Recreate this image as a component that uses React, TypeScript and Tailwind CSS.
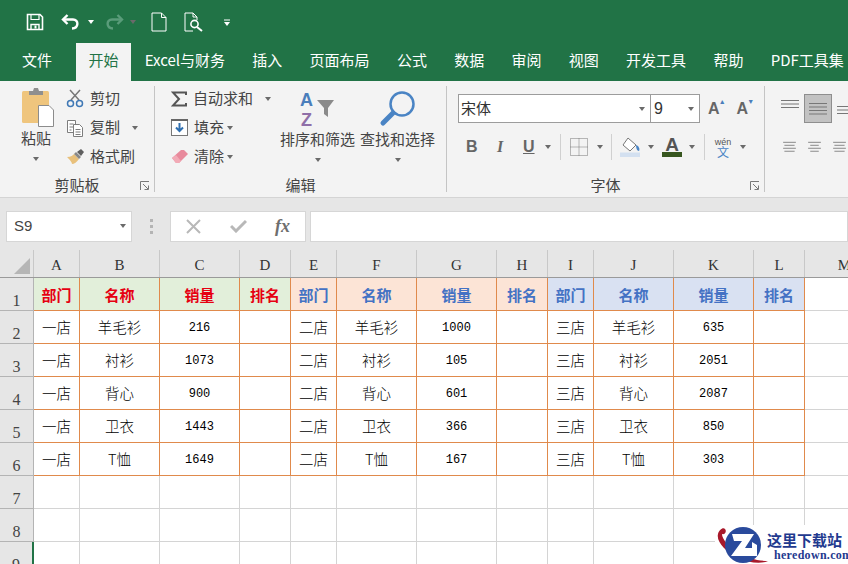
import type { ReactNode } from 'react';

const SANS = 'font-["Noto_Sans_CJK_SC","Noto_Sans",sans-serif]';

const tabs = ['Excel与财务', '插入', '页面布局', '公式', '数据', '审阅', '视图', '开发工具', '帮助', 'PDF工具集'];
const columns = ['A', 'B', 'C', 'D', 'E', 'F', 'G', 'H', 'I', 'J', 'K', 'L', 'M'];
const sales = [
  [['一店', '羊毛衫', '216'], ['二店', '羊毛衫', '1000'], ['三店', '羊毛衫', '635']],
  [['一店', '衬衫', '1073'], ['二店', '衬衫', '105'], ['三店', '衬衫', '2051']],
  [['一店', '背心', '900'], ['二店', '背心', '601'], ['三店', '背心', '2087']],
  [['一店', '卫衣', '1443'], ['二店', '卫衣', '366'], ['三店', '卫衣', '850']],
  [['一店', 'T恤', '1649'], ['二店', 'T恤', '167'], ['三店', 'T恤', '303']],
];
const headerFills = ['bg-[#e2efda] text-[#e60012]', 'bg-[#fce4d6] text-[#4472c4]', 'bg-[#d9e1f2] text-[#4472c4]'];
const headerLabels = ['部门', '名称', '销量', '排名'];
const gridCols = 'grid grid-cols-[34px_46px_80px_80px_51px_46px_80px_80px_51px_46px_80px_80px_51px_80px]';

function Caret({ className = '' }: { className?: string }) {
  return <span className={`inline-block w-0 h-0 border-x-[3.5px] border-x-transparent border-t-[4px] border-t-[#6a6a6a] ${className}`} />;
}

function SmallRow({ icon, label, caret, caretClass = 'ml-[3px]' }: { icon: ReactNode; label: string; caret?: boolean; caretClass?: string }) {
  return (
    <div className="flex items-center h-[29px] text-[15px] text-[#444]">
      {icon}
      <span>{label}</span>
      {caret && <Caret className={caretClass} />}
    </div>
  );
}

function DialogLauncher() {
  return (
    <svg width="10" height="10" viewBox="0 0 10 10" className="absolute right-[4px] bottom-[1px]" fill="none" stroke="#777">
      <path d="M0.5 9V0.5H9" />
      <path d="M3 3l5 5M8.5 4.5v4h-4" />
    </svg>
  );
}

function Group({ width, label, launcher, children }: { width: string; label: string; launcher?: boolean; children: ReactNode }) {
  return (
    <div className={`relative flex flex-col h-[106px] border-r border-[#c4c4c4] mt-[5px] ${width}`}>
      <div className="flex-1 mt-[-5px] min-h-0">{children}</div>
      <div className="h-[20px] mb-[-3px] text-center text-[15px] leading-[20px] text-[#444]">{label}</div>
      {launcher && <DialogLauncher />}
    </div>
  );
}

function AlignIcon({ widths }: { widths: number[] }) {
  return (
    <svg width="20" height="14" viewBox="0 0 20 14" stroke="#777" strokeWidth="1">
      {widths.map((w, i) => (
        <path key={i} d={`M${10 - w / 2} ${1.5 + i * 3.5}H${10 + w / 2}`} />
      ))}
    </svg>
  );
}

function QuickAccess() {
  return (
    <div className="flex items-center h-[43px] pl-[26px]">
      <svg width="18" height="18" viewBox="0 0 18 18" fill="none" stroke="#fff" strokeWidth="1.6">
        <path d="M1.5 1.5H14l2.5 2.5v12.5H1.5z" />
        <path d="M5 1.5v5h8v-5" strokeWidth="1.2" />
        <path d="M5 16.5v-5h8v5" strokeWidth="1.4" />
        <path d="M9.5 12.5v3" strokeWidth="2" />
      </svg>
      <svg width="20" height="18" viewBox="0 0 20 18" fill="none" stroke="#fff" strokeWidth="2.4" className="ml-[17px]">
        <path d="M6.5 2L2 6.5 6.5 11" />
        <path d="M2 6.5h10c6 0 6 8.5-1 9" />
      </svg>
      <Caret className="ml-[7px] border-t-white" />
      <svg width="20" height="18" viewBox="0 0 20 18" fill="none" stroke="#5a9c7a" strokeWidth="2.4" className="ml-[10px]">
        <path d="M13.5 2L18 6.5 13.5 11" />
        <path d="M18 6.5H8c-6 0-6 8.5 1 9" />
      </svg>
      <Caret className="ml-[6px] border-t-[#5a9c7a]" />
      <svg width="16" height="20" viewBox="0 0 16 20" fill="none" stroke="#fff" strokeWidth="1" className="ml-[15px]">
        <path d="M1 1h9.5L15 5.5V19H1z" />
        <path d="M10.5 1v4.5H15" />
      </svg>
      <svg width="20" height="20" viewBox="0 0 20 20" fill="none" stroke="#fff" className="ml-[17px]">
        <path d="M9 19H1V1h8l4 4v3M9 1v4h4" />
        <circle cx="10.5" cy="12" r="3.6" strokeWidth="1.6" />
        <path d="M13 15l5 4" strokeWidth="2" />
      </svg>
      <svg width="8" height="8" viewBox="0 0 8 8" className="ml-[19px] mt-[2px]" fill="#fff">
        <path d="M1 0.5h6v1H1zM1 3h6L4 7z" />
      </svg>
    </div>
  );
}

function TabBar() {
  return (
    <div className="flex h-[38px] pl-[8px] text-[15px] leading-[34px] text-white whitespace-nowrap">
      <div className="shrink-0 px-[14px]">文件</div>
      <div className="shrink-0 w-[55px] ml-[10px] text-center bg-[#f3f3f3] text-[#217346]">开始</div>
      {tabs.map((t) => (
        <div key={t} className="shrink-0 px-[13.65px]">{t}</div>
      ))}
    </div>
  );
}

function Clipboard() {
  return (
    <Group width="w-[155px]" label="剪贴板" launcher>
      <div className="flex pl-[17px] pt-[6px]">
        <div className="flex flex-col items-center w-[38px]">
          <svg width="36" height="40" viewBox="0 0 36 40">
            <rect x="4" y="4" width="27" height="32" rx="1.5" fill="#efc57d" />
            <path d="M11 8V4h4l1-3h4l1 3h4v4z" fill="#8f8f8f" />
            <path d="M20.5 18.5H31l4.5 4.5v16.5h-15z" fill="#fff" stroke="#8c8c8c" />
          </svg>
          <span className="text-[15px] leading-[22px] text-[#444]">粘贴</span>
          <Caret className="mt-[8px]" />
        </div>
        <div className="ml-[11px] mt-[-3px]">
          <SmallRow
            label="剪切"
            icon={
              <svg width="18" height="19" viewBox="0 0 18 19" fill="none" className="mr-[6px]">
                <path d="M5 11L14 1M13 11L4 1" stroke="#777" strokeWidth="1.5" />
                <circle cx="4.5" cy="14.5" r="3" stroke="#3f78b5" strokeWidth="1.5" />
                <circle cx="13.5" cy="14.5" r="3" stroke="#3f78b5" strokeWidth="1.5" />
              </svg>
            }
          />
          <SmallRow
            label="复制"
            caret
            caretClass="ml-[12px]"
            icon={
              <svg width="18" height="18" viewBox="0 0 18 18" fill="#fff" stroke="#7d7d7d" className="mr-[6px]">
                <path d="M1.5 1.5h8v12h-8zM3.5 5h4M3.5 8h4M3.5 11h2" />
                <path d="M7.5 5.5h6l3 3v9h-9z" />
                <path d="M9.5 10.5h5M9.5 13h5M9.5 15.5h5" />
              </svg>
            }
          />
          <SmallRow
            label="格式刷"
            icon={
              <svg width="18" height="16" viewBox="0 0 18 16" className="mr-[6px]">
                <path d="M1 8c4 0 6-2 7-3l5 5c-2 3-5 5-7 5C6 13 3 10 1 8z" fill="#e8c07b" />
                <path d="M8 5l2-2 5 5-2 2z" fill="#888" />
                <path d="M11 3l4-3 3 3-3 4z" fill="#5f5f5f" />
              </svg>
            }
          />
        </div>
      </div>
    </Group>
  );
}

function Editing() {
  return (
    <Group width="w-[292px]" label="编辑">
      <div className="flex pt-[3px]">
        <div className="pl-[16px] w-[125px]">
          <SmallRow
            label="自动求和"
            caret
            caretClass="ml-[12px]"
            icon={
              <svg width="16" height="16" viewBox="0 0 16 16" fill="none" stroke="#555" strokeWidth="2" className="mr-[6px]">
                <path d="M15 4V1.5H2l6 6.500-6 6.500h13V12" />
              </svg>
            }
          />
          <SmallRow
            label="填充"
            caret
            icon={
              <svg width="17" height="17" viewBox="0 0 17 17" className="mr-[6px]">
                <rect x="0.5" y="0.5" width="16" height="16" fill="#fff" stroke="#777" />
                <path d="M0 0h17v2H0z" fill="#666" />
                <path d="M8.5 4v8M5 8.500l3.500 3.500 3.500-3.500" fill="none" stroke="#2f6fb0" strokeWidth="2" />
              </svg>
            }
          />
          <SmallRow
            label="清除"
            caret
            icon={
              <svg width="17" height="15" viewBox="0 0 17 15" className="mr-[6px]">
                <path d="M1 9l9-8h3l4 4-9 9H5z" fill="#e88a9c" />
                <path d="M1 9l4 5h3l2-2-5-6z" fill="#f2aab6" />
              </svg>
            }
          />
        </div>
        <div className="flex flex-col items-center w-[75px] pt-[6px]">
          <svg width="38" height="38" viewBox="0 0 38 38">
            <text x="1" y="16" fontFamily="Liberation Sans" fontWeight="700" fontSize="18" fill="#4a7ebb">A</text>
            <text x="2" y="36" fontFamily="Liberation Sans" fontWeight="700" fontSize="18" fill="#8f6fa8">Z</text>
            <path d="M18 10h17l-6 8v9l-4-3v-6z" fill="#8a8a8a" />
          </svg>
          <span className="text-[15px] leading-[22px] text-[#444] whitespace-nowrap">排序和筛选</span>
          <Caret className="mt-[8px]" />
        </div>
        <div className="flex flex-col items-center w-[85px] pt-[6px]">
          <svg width="38" height="38" viewBox="0 0 38 38" fill="none" stroke="#4a84c4">
            <circle cx="23" cy="14" r="11.5" strokeWidth="2.5" />
            <path d="M14 23L4 33" strokeWidth="5" strokeLinecap="round" />
          </svg>
          <span className="text-[15px] leading-[22px] text-[#444] whitespace-nowrap">查找和选择</span>
          <Caret className="mt-[8px]" />
        </div>
      </div>
    </Group>
  );
}

function FontGroup() {
  return (
    <Group width="w-[318px]" label="字体" launcher>
      <div className="pl-[11px] pt-[13px]">
        <div className="flex items-center h-[29px]">
          <div className="flex items-center justify-between w-[193px] h-full bg-white border border-[#9c9c9c] pl-[2px] pr-[5px] text-[15px] text-[#333]">
            <span>宋体</span>
            <Caret />
          </div>
          <div className="flex items-center justify-between w-[49px] h-full bg-white border border-l-0 border-[#9c9c9c] pl-[3px] pr-[5px] text-[16px] text-[#333] font-['Liberation_Sans']">
            <span>9</span>
            <Caret />
          </div>
          <span className="relative ml-[8px] text-[16px] font-['Liberation_Sans'] font-bold text-[#666] leading-none">
            A<span className="absolute top-[-3px] right-[-6px] text-[7px] text-[#4a7ebb]">▲</span>
          </span>
          <span className="relative ml-[17px] text-[16px] font-['Liberation_Sans'] font-bold text-[#666] leading-none">
            A<span className="absolute top-[-3px] right-[-6px] text-[7px] text-[#4a7ebb]">▼</span>
          </span>
        </div>
        <div className="flex items-center h-[30px] mt-[9px] pl-[8px]">
          <span className="w-[31px] text-[16px] font-['Liberation_Sans'] font-bold text-[#666]">B</span>
          <span className="w-[26px] text-[16px] font-['Liberation_Serif'] italic font-bold text-[#666]">I</span>
          <span className="w-[16px] text-[16px] font-['Liberation_Sans'] font-bold underline text-[#666]">U</span>
          <Caret className="ml-[6px]" />
          <span className="w-px h-[26px] bg-[#d0d0d0] ml-[9px]" />
          <svg width="18" height="18" viewBox="0 0 18 18" fill="none" stroke="#777" strokeDasharray="1 1" className="ml-[9px]">
            <path d="M0.5 0.5h17v17h-17zM9 0.5v17M0.5 9h17" />
          </svg>
          <Caret className="ml-[9px]" />
          <span className="w-px h-[26px] bg-[#d0d0d0] ml-[8px]" />
          <svg width="21" height="20" viewBox="0 0 21 20" className="ml-[8px]">
            <path d="M8 1l8 7-6 6-7-6z" fill="#fff" stroke="#777" />
            <path d="M16 8c3 1 4 4 3 6-2 0-3-3-3-6z" fill="#4a84c4" />
            <path d="M0 15.5h20V20H0z" fill="#d3e0f0" />
          </svg>
          <Caret className="ml-[7px]" />
          <svg width="20" height="20" viewBox="0 0 20 20" className="ml-[8px]">
            <text x="10" y="14" textAnchor="middle" fontFamily="Liberation Sans" fontWeight="700" fontSize="19" fill="#555">A</text>
            <path d="M0 15h20v5H0z" fill="#37561f" />
          </svg>
          <Caret className="ml-[7px]" />
          <span className="w-px h-[26px] bg-[#d0d0d0] ml-[9px]" />
          <span className="flex flex-col items-center w-[18px] ml-[9px] leading-[10px]">
            <span className="text-[9px] font-['Liberation_Sans'] text-[#555]">wén</span>
            <span className="text-[12px] text-[#4a84c4]">文</span>
          </span>
          <Caret className="ml-[8px]" />
        </div>
      </div>
    </Group>
  );
}

function Alignment() {
  return (
    <div className="flex-1 overflow-hidden pl-[15px] pt-[13px]">
      <div className="flex items-center h-[29px]">
        <span className="mb-[6px]"><AlignIcon widths={[18, 18, 18]} /></span>
        <span className="flex items-center justify-center shrink-0 w-[28px] h-[29px] ml-[4px] bg-[#c2c2c2] border border-[#8e8e8e]">
          <AlignIcon widths={[18, 18, 18, 18]} />
        </span>
        <span className="shrink-0 ml-[4px] mt-[6px]"><AlignIcon widths={[18, 18, 18]} /></span>
      </div>
      <div className="flex items-center h-[30px] mt-[9px] pl-[1px] gap-[8px]">
        <AlignIcon widths={[15, 12, 15, 12]} />
        <AlignIcon widths={[15, 10, 15, 10]} />
        <AlignIcon widths={[15, 12, 15, 12]} />
      </div>
    </div>
  );
}

function FormulaBar() {
  return (
    <div className="flex items-center h-[53px] pl-[6px] bg-[#e6e6e6] border-t border-[#d4d4d4] pt-[4px]">
      <div className="flex items-center justify-between w-[126px] h-[31px] pl-[7px] pr-[5px] bg-white border border-[#d6d6d6] text-[15px] text-[#444] font-['Liberation_Sans']">
        <span>S9</span>
        <Caret />
      </div>
      <div className="flex flex-col gap-[3px] w-[38px] items-center">
        <span className="w-[3px] h-[3px] bg-[#b4b4b4]" />
        <span className="w-[3px] h-[3px] bg-[#b4b4b4]" />
        <span className="w-[3px] h-[3px] bg-[#b4b4b4]" />
      </div>
      <div className="flex items-center justify-between w-[136px] h-[31px] pl-[15px] pr-[15px] bg-white border border-[#d6d6d6]">
        <svg width="15" height="15" viewBox="0 0 15 15" stroke="#b8b8b8" strokeWidth="2">
          <path d="M1 1l13 13M14 1L1 14" />
        </svg>
        <svg width="17" height="14" viewBox="0 0 17 14" fill="none" stroke="#b8b8b8" strokeWidth="3">
          <path d="M1 7l5 5L16 2" />
        </svg>
        <span className="font-['Liberation_Serif'] italic font-bold text-[18px] text-[#6e6e6e]">fx</span>
      </div>
      <div className="flex-1 h-[31px] ml-[4px] bg-white border border-[#d6d6d6]" />
    </div>
  );
}

function Sheet() {
  const cellBase = 'flex items-center justify-center border-r border-b overflow-hidden';
  const orange = 'border-[#e08a4c]';
  const plain = 'border-[#d4d4d4]';
  const rowHead = 'flex items-end justify-center pb-[1px] bg-[#e6e6e6] border-r border-b border-[#b4b4b4] text-[16px] leading-none text-[#444] font-["Liberation_Serif"]';

  return (
    <div className="flex-1 overflow-hidden bg-white">
      <div className={`${gridCols} h-[28px] bg-[#e6e6e6] border-b border-[#9a9a9a]`}>
        <div className="flex items-end justify-end pr-[3px] pb-[3px] border-r border-[#c8c8c8]">
          <span className="w-0 h-0 border-l-[16px] border-l-transparent border-b-[16px] border-b-[#b6b6b6]" />
        </div>
        {columns.map((c) => (
          <div key={c} className="flex items-center justify-center pt-[3px] border-r border-[#c8c8c8] text-[15px] text-[#333] font-['Liberation_Serif']">
            {c}
          </div>
        ))}
      </div>

      <div className={`${gridCols} h-[33px]`}>
        <div className={rowHead}>1</div>
        {headerFills.flatMap((fill, g) =>
          headerLabels.map((label) => (
            <div key={`${g}${label}`} className={`${cellBase} ${orange} ${fill} text-[15px] font-bold leading-none ${SANS}`}>
              {label}
            </div>
          ))
        )}
        <div className={`${cellBase} ${plain}`} />
      </div>

      {sales.map((row, r) => (
        <div key={r} className={`${gridCols} h-[33px]`}>
          <div className={rowHead}>{r + 2}</div>
          {row.flatMap((block, b) => [
            ...block.map((text, i) => (
              <div
                key={`${b}${i}`}
                className={`${cellBase} ${orange} text-black ${i === 2 ? "pt-[1px] font-['Liberation_Mono'] text-[12px]" : `text-[14.5px] font-light ${SANS}`}`}
              >
                {text}
              </div>
            )),
            <div key={`${b}rank`} className={`${cellBase} ${orange}`} />,
          ])}
          <div className={`${cellBase} ${plain}`} />
        </div>
      ))}

      {[7, 8, 9].map((n) => (
        <div key={n} className={`${gridCols} h-[33px]`}>
          <div className={n === 9 ? `${rowHead} bg-[#c4c4c4] border-r-2 border-r-[#217346]` : rowHead}>{n}</div>
          {columns.map((c) => (
            <div key={c} className={`${cellBase} ${plain}`} />
          ))}
        </div>
      ))}
    </div>
  );
}

function Watermark() {
  return (
    <div className="absolute right-0 bottom-0 flex w-[133px] h-[39px] bg-white">
      <svg width="56" height="39" viewBox="0 0 56 39" className="shrink-0">
        <path d="M3 9c-2 8 8 18 20 24 10 5 24 6 30 3-10 0-22-3-31-9C13 21 7 14 7 9c3 1 5-3 3-5S4 5 3 9z" fill="#a8182a" />
        <circle cx="28" cy="20" r="18" fill="#2a4a9c" />
        <path d="M17 9h22l-9 14h7v-6l5 3v11H16l11-15H19z" fill="#fff" />
      </svg>
      <div className="flex flex-col items-start mt-[6px] ml-[-4px] font-['Liberation_Serif'] font-bold text-[#1f3a8f]">
        <span className={`text-[15px] leading-[17px] whitespace-nowrap ${SANS}`}>这里下载站</span>
        <span className="text-[12px] leading-[14px] ml-[7px] tracking-[0.3px]">heredown.com</span>
      </div>
    </div>
  );
}

export default function App() {
  return (
    <div className={`relative flex flex-col w-[848px] h-[564px] overflow-hidden ${SANS}`}>
      <div className="bg-[#217346] h-[81px]">
        <QuickAccess />
        <TabBar />
      </div>
      <div className="flex h-[116px] bg-[#f3f3f3]">
        <Clipboard />
        <Editing />
        <FontGroup />
        <Alignment />
      </div>
      <FormulaBar />
      <Sheet />
      <Watermark />
    </div>
  );
}
